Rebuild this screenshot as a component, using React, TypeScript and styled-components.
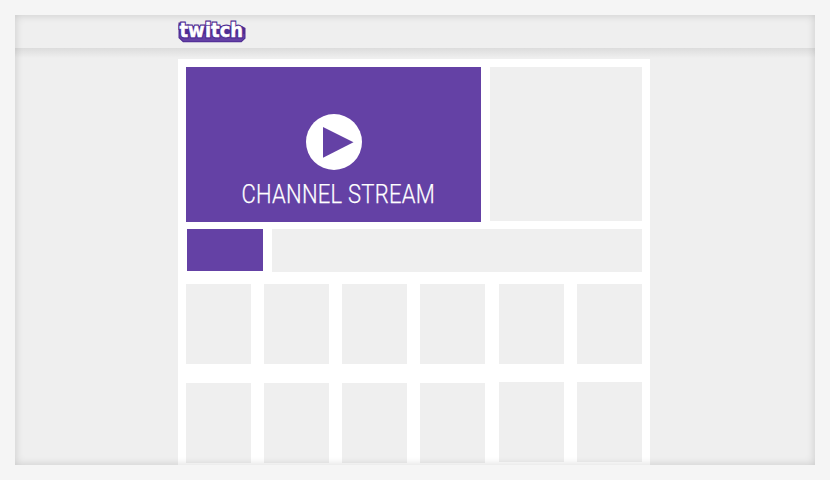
import React from "react";
import styled, { createGlobalStyle } from "styled-components";

const purple = "#6441a5";
const outline = "#4f2d94";
const grey = "#efefef";

const GlobalStyle = createGlobalStyle`
  * { box-sizing: border-box; }
  body { margin: 0; background: #f5f5f5; overflow: hidden; }
`;

const Page = styled.div`
  width: 830px;
  height: 480px;
  padding: 15px;
  background: #f5f5f5;
`;

const Frame = styled.div`
  position: relative;
  height: 450px;
  background: ${grey};
  overflow: hidden;
`;

const InnerShade = styled.div`
  position: absolute;
  inset: 0;
  pointer-events: none;
  box-shadow: inset 0 0 8px rgba(0, 0, 0, 0.17);
`;

const Header = styled.header`
  height: 33px;
  padding: 3px 0 0 161px;
`;

const Logo = styled.svg`
  display: block;
  overflow: visible;
`;

const Wordmark = styled.text`
  font-family: "DejaVu Sans", "Liberation Sans", sans-serif;
  font-weight: 700;
  font-size: 18px;
  stroke-linejoin: miter;
`;

const Body = styled.div`
  height: 417px;
  padding-top: 11px;
  background: linear-gradient(#dcdcdc, ${grey} 10px);
`;

const Channel = styled.main`
  width: 472px;
  height: 406px;
  margin-left: 163px;
  padding: 8px;
  background: #fff;
`;

const TopRow = styled.div`
  display: flex;
  gap: 9px;
  height: 155px;
`;

const Stream = styled.section`
  width: 295px;
  height: 155px;
  padding-top: 47px;
  background: ${purple};
  display: flex;
  flex-direction: column;
  align-items: center;
`;

const Play = styled.svg`
  display: block;
  flex: none;
  margin-left: 1px;
`;

const Title = styled.div`
  margin-top: 9px;
  margin-left: 10px;
  font: 300 25.5px/30px "Roboto", "Liberation Sans", sans-serif;
  letter-spacing: 0.3px;
  white-space: nowrap;
  color: #fff;
  -webkit-text-stroke: 0.25px #fff;
  transform: scaleX(0.862);
`;

const Block = styled.div<{ $w: number; $h: number; $accent?: boolean }>`
  width: ${(p) => p.$w}px;
  height: ${(p) => p.$h}px;
  background: ${(p) => (p.$accent ? purple : grey)};
`;

const InfoRow = styled.div`
  display: flex;
  gap: 9px;
  margin-top: 7px;
  padding-left: 1px;
  height: 43px;
`;

const Cards = styled.div`
  display: grid;
  grid-template-columns: 65px 65px 65px 66px 65px 65px;
  grid-template-rows: 80px 81px;
  gap: 18px 13px;
  margin-top: 12px;
`;

const Card = styled.div<{ $low: boolean }>`
  width: 65px;
  height: 80px;
  align-self: ${(p) => (p.$low ? "end" : "start")};
  background: ${grey};
`;

const letters = "3.6 12 28.9 35.1 43.8 54.3";

function TwitchLogo() {
  return (
    <Logo width="72" height="26" viewBox="0 0 72 26" aria-label="twitch">
      <path d="M2.5 4.5H7V8H66L69.5 10V20.5L65.5 24.3H7L2.5 20Z" fill={outline} />
      <path d="M3.5 16H68.5V20L65 23.3H7.5L3.5 19.5Z" fill={purple} />
      <g transform="translate(0 19.2) scale(1 1.12)">
        <Wordmark x={letters} y="0" fill={outline} stroke={outline} strokeWidth="2.6">
          twitch
        </Wordmark>
        <Wordmark x={letters} y="0" fill="#fff" stroke="#fff" strokeWidth="0.4">
          twitch
        </Wordmark>
      </g>
    </Logo>
  );
}

export default function App() {
  return (
    <>
      <GlobalStyle />
      <Page>
        <Frame>
          <Header>
            <TwitchLogo />
          </Header>
          <Body>
            <Channel>
              <TopRow>
                <Stream>
                  <Play width="56" height="56" viewBox="0 0 56 56">
                    <circle cx="28" cy="28" r="28" fill="#fff" />
                    <path d="M17 13L47.5 28.3L17 43.7Z" fill={purple} />
                  </Play>
                  <Title>CHANNEL STREAM</Title>
                </Stream>
                <Block $w={152} $h={154} />
              </TopRow>
              <InfoRow>
                <Block $w={76} $h={42} $accent />
                <Block $w={370} $h={43} />
              </InfoRow>
              <Cards>
                {Array.from({ length: 12 }, (_, i) => (
                  <Card key={i} $low={i > 5 && i < 10} />
                ))}
              </Cards>
            </Channel>
          </Body>
          <InnerShade />
        </Frame>
      </Page>
    </>
  );
}
